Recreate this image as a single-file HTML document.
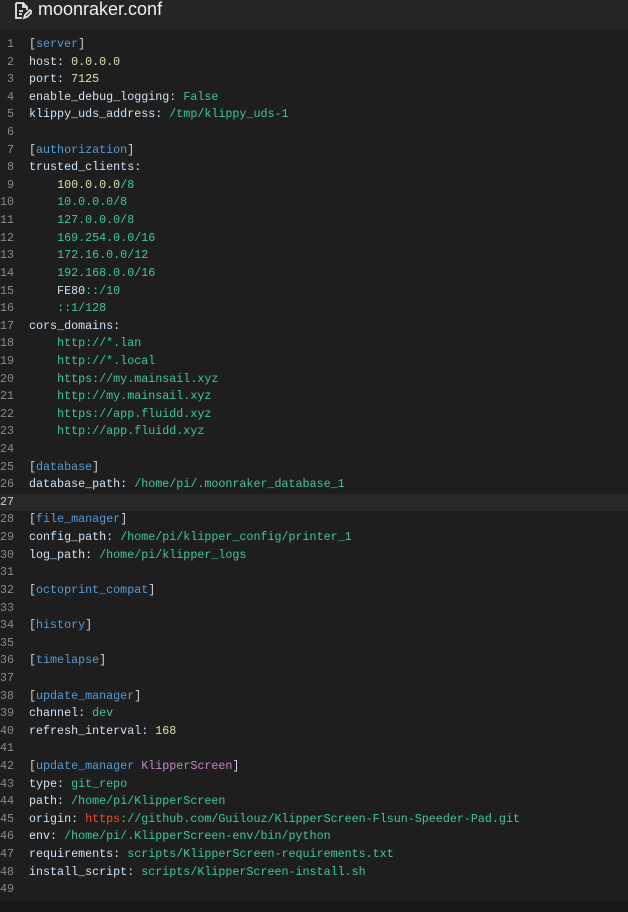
<!DOCTYPE html>
<html><head><meta charset="utf-8"><style>
html,body{margin:0;padding:0;background:#1e1e1e;width:628px;height:912px;overflow:hidden}
.hdr{position:absolute;left:0;top:0;width:628px;height:30px;background:#252526}
.hdr .t{position:absolute;left:38px;top:-3px;font:18px "Liberation Sans",sans-serif;color:#f0f0f0;line-height:24px}
.code{position:absolute;left:0;top:36px;width:628px;font:11.7px/17.62px "Liberation Mono",monospace;color:#cfe3f4}
.l{height:17.62px;position:relative;white-space:pre}
.n{display:inline-block;width:14px;text-align:right;color:#8a8a8a;margin-right:15px}
.hl{background:#282828}
.s{color:#569cd6}.b{color:#d4d4d4}.v{color:#3ec7a0}.y{color:#d7e3a8}.p{color:#c586c0}.r{color:#f44b1e}
.foot{position:absolute;left:0;top:901px;width:628px;height:11px;background:#181818}
</style></head><body>
<div class="hdr"><svg style="position:absolute;left:12px;top:1px" width="20" height="20" viewBox="0 0 20 20" fill="none" stroke="#e8e8e8" stroke-width="1.8"><path d="M4 2h7l4 4v3M4 2v15h6M11 2v4h4"/><path d="M7 10h4M7 13h3"/><path d="M12 17l1-3 5-5 2 2-5 5z"/></svg><div class="t">moonraker.conf</div></div>
<div class="code"><div class="l"><span class="n">1</span><span class="b">[</span><span class="s">server</span><span class="b">]</span></div><div class="l"><span class="n">2</span>host: <span class="y">0.0.0.0</span></div><div class="l"><span class="n">3</span>port: <span class="y">7125</span></div><div class="l"><span class="n">4</span>enable_debug_logging: <span class="v">False</span></div><div class="l"><span class="n">5</span>klippy_uds_address: <span class="v">/tmp/klippy_uds-1</span></div><div class="l"><span class="n">6</span></div><div class="l"><span class="n">7</span><span class="b">[</span><span class="s">authorization</span><span class="b">]</span></div><div class="l"><span class="n">8</span>trusted_clients:</div><div class="l"><span class="n">9</span>    <span class="y">100.0.0.0</span><span class="v">/8</span></div><div class="l"><span class="n">10</span>    <span class="v">10.0.0.0/8</span></div><div class="l"><span class="n">11</span>    <span class="v">127.0.0.0/8</span></div><div class="l"><span class="n">12</span>    <span class="v">169.254.0.0/16</span></div><div class="l"><span class="n">13</span>    <span class="v">172.16.0.0/12</span></div><div class="l"><span class="n">14</span>    <span class="v">192.168.0.0/16</span></div><div class="l"><span class="n">15</span>    FE80<span class="v">::/10</span></div><div class="l"><span class="n">16</span>    <span class="v">::1/128</span></div><div class="l"><span class="n">17</span>cors_domains:</div><div class="l"><span class="n">18</span>    <span class="v">http://*.lan</span></div><div class="l"><span class="n">19</span>    <span class="v">http://*.local</span></div><div class="l"><span class="n">20</span>    <span class="v">https://my.mainsail.xyz</span></div><div class="l"><span class="n">21</span>    <span class="v">http://my.mainsail.xyz</span></div><div class="l"><span class="n">22</span>    <span class="v">https://app.fluidd.xyz</span></div><div class="l"><span class="n">23</span>    <span class="v">http://app.fluidd.xyz</span></div><div class="l"><span class="n">24</span></div><div class="l"><span class="n">25</span><span class="b">[</span><span class="s">database</span><span class="b">]</span></div><div class="l"><span class="n">26</span>database_path: <span class="v">/home/pi/.moonraker_database_1</span></div><div class="l hl"><span class="n" style="color:#cfcfcf">27</span></div><div class="l"><span class="n">28</span><span class="b">[</span><span class="s">file_manager</span><span class="b">]</span></div><div class="l"><span class="n">29</span>config_path: <span class="v">/home/pi/klipper_config/printer_1</span></div><div class="l"><span class="n">30</span>log_path: <span class="v">/home/pi/klipper_logs</span></div><div class="l"><span class="n">31</span></div><div class="l"><span class="n">32</span><span class="b">[</span><span class="s">octoprint_compat</span><span class="b">]</span></div><div class="l"><span class="n">33</span></div><div class="l"><span class="n">34</span><span class="b">[</span><span class="s">history</span><span class="b">]</span></div><div class="l"><span class="n">35</span></div><div class="l"><span class="n">36</span><span class="b">[</span><span class="s">timelapse</span><span class="b">]</span></div><div class="l"><span class="n">37</span></div><div class="l"><span class="n">38</span><span class="b">[</span><span class="s">update_manager</span><span class="b">]</span></div><div class="l"><span class="n">39</span>channel: <span class="v">dev</span></div><div class="l"><span class="n">40</span>refresh_interval: <span class="y">168</span></div><div class="l"><span class="n">41</span></div><div class="l"><span class="n">42</span><span class="b">[</span><span class="s">update_manager</span> <span class="p">KlipperScreen</span><span class="b">]</span></div><div class="l"><span class="n">43</span>type: <span class="v">git_repo</span></div><div class="l"><span class="n">44</span>path: <span class="v">/home/pi/KlipperScreen</span></div><div class="l"><span class="n">45</span>origin: <span class="r">https</span><span class="v">://github.com/Guilouz/KlipperScreen-Flsun-Speeder-Pad.git</span></div><div class="l"><span class="n">46</span>env: <span class="v">/home/pi/.KlipperScreen-env/bin/python</span></div><div class="l"><span class="n">47</span>requirements: <span class="v">scripts/KlipperScreen-requirements.txt</span></div><div class="l"><span class="n">48</span>install_script: <span class="v">scripts/KlipperScreen-install.sh</span></div><div class="l"><span class="n">49</span></div></div>
<div class="foot"></div>
</body></html>
